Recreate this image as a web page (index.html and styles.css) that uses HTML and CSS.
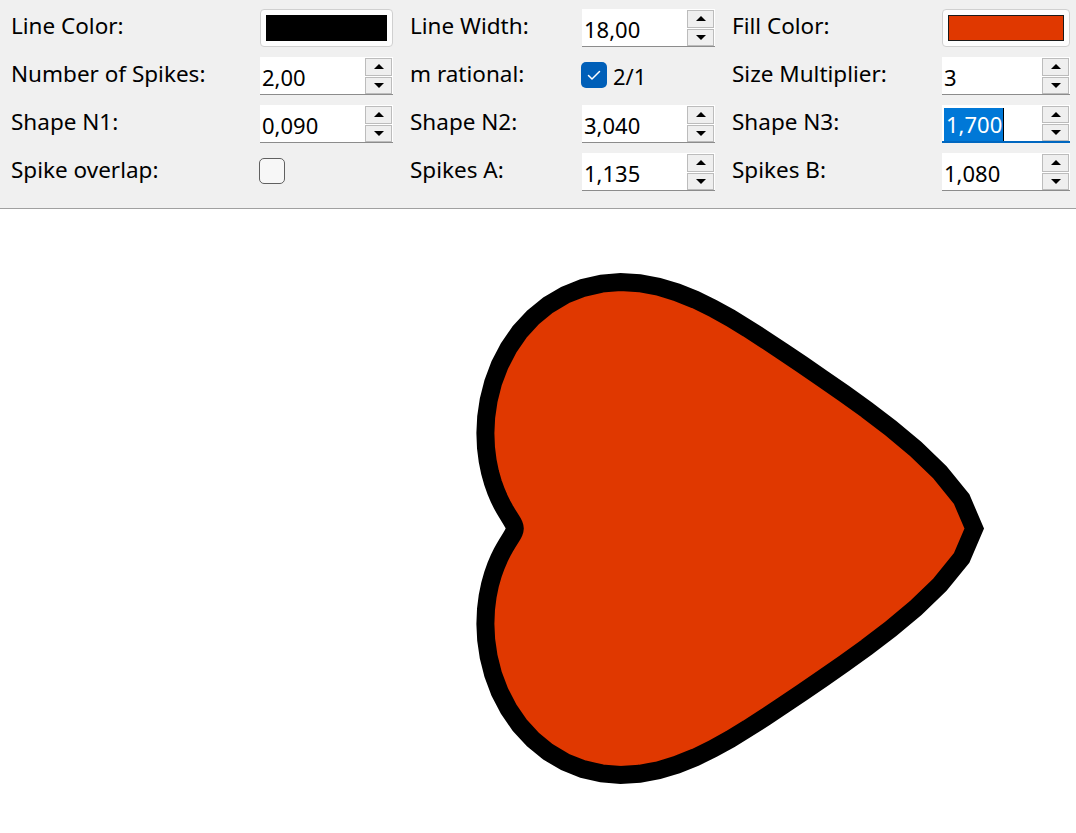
FILE: index.html
```html
<!DOCTYPE html>
<html>
<head>
<meta charset="utf-8">
<link rel="stylesheet" href="styles.css">
</head>
<body>
<div class="panel">
  <div class="grid">
    <span class="lbl">Line Color:</span>
    <div class="colorbtn"><span class="swatch swatch-black"></span></div>
    <span class="lbl">Line Width:</span>
    <div class="spin"><span class="val">18,00</span><div class="btns"><span class="sb"><i class="tri-up"></i></span><span class="sb"><i class="tri-down"></i></span></div></div>
    <span class="lbl">Fill Color:</span>
    <div class="colorbtn"><span class="swatch swatch-red"></span></div>

    <span class="lbl">Number of Spikes:</span>
    <div class="spin"><span class="val">2,00</span><div class="btns"><span class="sb"><i class="tri-up"></i></span><span class="sb"><i class="tri-down"></i></span></div></div>
    <span class="lbl">m rational:</span>
    <div class="checkfield"><span class="chk chk-on"><svg width="26" height="26" viewBox="0 0 26 26"><polyline points="7.5,13.5 11,17 18.5,9.5" fill="none" stroke="#fff" stroke-width="1.5" stroke-linecap="round" stroke-linejoin="round"/></svg></span><span class="chktext">2/1</span></div>
    <span class="lbl">Size Multiplier:</span>
    <div class="spin"><span class="val">3</span><div class="btns"><span class="sb"><i class="tri-up"></i></span><span class="sb"><i class="tri-down"></i></span></div></div>

    <span class="lbl">Shape N1:</span>
    <div class="spin"><span class="val">0,090</span><div class="btns"><span class="sb"><i class="tri-up"></i></span><span class="sb"><i class="tri-down"></i></span></div></div>
    <span class="lbl">Shape N2:</span>
    <div class="spin"><span class="val">3,040</span><div class="btns"><span class="sb"><i class="tri-up"></i></span><span class="sb"><i class="tri-down"></i></span></div></div>
    <span class="lbl">Shape N3:</span>
    <div class="spin spin-focus"><span class="val"><span class="sel">1,700</span><span class="caret"></span></span><div class="btns"><span class="sb"><i class="tri-up"></i></span><span class="sb"><i class="tri-down"></i></span></div></div>

    <span class="lbl">Spike overlap:</span>
    <div class="checkfield"><span class="chk chk-off"></span></div>
    <span class="lbl">Spikes A:</span>
    <div class="spin"><span class="val">1,135</span><div class="btns"><span class="sb"><i class="tri-up"></i></span><span class="sb"><i class="tri-down"></i></span></div></div>
    <span class="lbl">Spikes B:</span>
    <div class="spin"><span class="val">1,080</span><div class="btns"><span class="sb"><i class="tri-up"></i></span><span class="sb"><i class="tri-down"></i></span></div></div>
  </div>
</div>
<div class="canvas">
  <svg class="canvas-svg" width="1076" height="624" viewBox="0 0 1076 624">
    <path id="shape" d="" fill="#e03800" stroke="#000" stroke-width="18" stroke-linejoin="miter"/>
  </svg>
</div>
<script src="script.js"></script>
</body>
</html>
```

FILE: styles.css
```css
html, body {
  margin: 0;
  padding: 0;
  background: #ffffff;
  font-family: "Noto Sans", "Open Sans", sans-serif;
  color: #000;
}

.panel {
  background: #f0f0f0;
  border-bottom: 1px solid #a0a0a0;
  padding: 9px 0 17px 11px;
}

.grid {
  display: grid;
  grid-template-columns: 232px 133px 155px 133px 193px 128px;
  grid-auto-rows: 38px;
  column-gap: 17px;
  row-gap: 10px;
}

.lbl {
  font-size: 22.5px;
  line-height: 38px;
  height: 38px;
  margin-top: -2px;
  white-space: nowrap;
}

.colorbtn {
  box-sizing: border-box;
  height: 38px;
  border: 1px solid #d0d0d0;
  border-radius: 4px;
  background: #fdfdfd;
  padding: 5px;
  display: flex;
}

.swatch {
  flex: 1;
  box-sizing: border-box;
}

.swatch-black {
  background: #000;
}

.swatch-red {
  background: #e03800;
  border: 1px solid #1a1a1a;
}

.spin {
  box-sizing: border-box;
  height: 38px;
  background: #fff;
  border-bottom: 1px solid #8c8c8c;
  display: flex;
  align-items: stretch;
}

.spin-focus {
  border-bottom: 2px solid #0067c0;
}

.val {
  flex: 1;
  display: flex;
  align-items: center;
  padding-left: 2px;
  font-size: 22px;
  padding-top: 2px;
}

.sel {
  background: #0078d7;
  color: #fff;
  line-height: 33px;
  padding: 0 1px 0 2px;
}

.caret {
  display: inline-block;
  width: 1px;
  height: 33px;
  background: #000;
}

.btns {
  width: 27px;
  margin: 1px 1px 0 0;
  display: flex;
  flex-direction: column;
  gap: 1px;
}

.sb {
  flex: 1;
  box-sizing: border-box;
  border: 1px solid #bcbcbc;
  background: #efefef;
  display: flex;
  align-items: center;
  justify-content: center;
}

.tri-up {
  width: 0;
  height: 0;
  border-left: 5px solid transparent;
  border-right: 5px solid transparent;
  border-bottom: 5px solid #000;
}

.tri-down {
  width: 0;
  height: 0;
  border-left: 5px solid transparent;
  border-right: 5px solid transparent;
  border-top: 5px solid #000;
}

.checkfield {
  display: flex;
  align-items: center;
  gap: 6px;
}

.chk {
  box-sizing: border-box;
  width: 26px;
  height: 26px;
  border-radius: 5px;
  display: flex;
}

.chk-on {
  background: #005fb8;
  margin-left: -1px;
  margin-top: -2px;
}

.chk-off {
  width: 26px;
  height: 26px;
  border: 1.5px solid #606060;
  background: #f7f7f7;
  margin-left: -1px;
  margin-top: -2px;
}

.chktext {
  font-size: 22px;
  margin-top: 0;
}

.canvas {
  height: 624px;
  background: #fff;
  overflow: hidden;
}

.canvas-svg {
  display: block;
}
```

FILE: script.js
```js
(function () {
  var a = 1.135, b = 1.08, m = 2, n1 = 0.09, n2 = 3.04, n3 = 1.7;
  var cx = 540.5, cy = 319.5, s = 6.02;
  var steps = 90;
  var pts = [];
  for (var i = 0; i < steps; i++) {
    var phi = (i / steps) * Math.PI * 2;
    var t1 = Math.pow(Math.abs(Math.cos(m * phi / 4) / a), n2);
    var t2 = Math.pow(Math.abs(Math.sin(m * phi / 4) / b), n3);
    var r = Math.pow(t1 + t2, -1 / n1);
    var x = cx + s * r * Math.cos(phi);
    var y = cy - s * r * Math.sin(phi);
    pts.push(x.toFixed(2) + "," + y.toFixed(2));
  }
  document.getElementById("shape").setAttribute("d", "M" + pts.join(" L") + " Z");
})();
```
